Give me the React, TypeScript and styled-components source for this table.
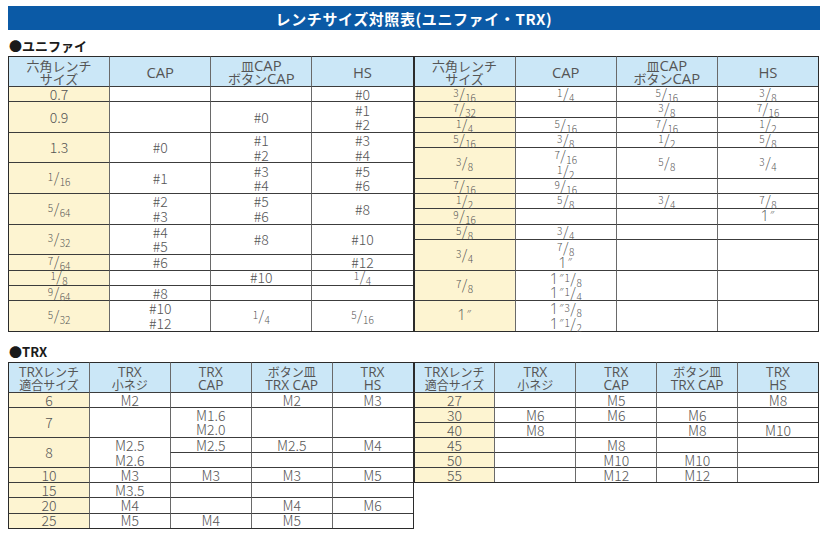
import React from 'react';
import styled, { createGlobalStyle } from 'styled-components';

const Global = createGlobalStyle`
  html, body { margin: 0; padding: 0; background: #ffffff; }
  body { font-family: "Noto Sans CJK JP", "Noto Sans", sans-serif; }
`;

const Page = styled.div`
  width: 829px;
  padding: 6px 0 0 8px;
  box-sizing: border-box;
`;

const Banner = styled.div`
  width: 812px;
  height: 24px;
  background: #0b5aa6;
  color: #ffffff;
  font-weight: 700;
  font-size: 15px;
  display: flex;
  align-items: center;
  justify-content: center;
  letter-spacing: 0.6px;
`;

const SectionTitle = styled.div<{ $gap: number }>`
  margin-top: ${(p) => p.$gap}px;
  height: 20px;
  line-height: 20px;
  font-size: 13px;
  font-weight: 700;
  color: #1a1a1a;
  padding-left: 1px;
`;

const Pair = styled.div`
  display: flex;
  align-items: flex-start;
  width: 811px;
`;

const Grid = styled.div<{ $cols: number; $units: number; $unit: number }>`
  flex: 1;
  display: grid;
  grid-template-columns: repeat(${(p) => p.$cols}, 1fr);
  grid-template-rows: 30px repeat(${(p) => p.$units}, ${(p) => p.$unit}px);
  border-right: 1px solid #2b2b2b;
  border-bottom: 1px solid #2b2b2b;
`;

const CellBase = styled.div<{ $edge?: boolean }>`
  box-sizing: border-box;
  display: flex;
  flex-direction: column;
  align-items: center;
  justify-content: center;
  text-align: center;
  border-left: 1px solid ${(p) => (p.$edge ? '#2b2b2b' : '#6a6a6a')};
  color: #555555;
  white-space: nowrap;
`;

const HeadCell = styled(CellBase)<{ $size: number }>`
  background: #cbe7f7;
  border-top: 1px solid #2b2b2b;
  font-size: ${(p) => p.$size}px;
  line-height: 13px;
  padding-top: 1px;
`;

const Lat = styled.span`
  font-family: "Open Sans", "Noto Sans", sans-serif;
  font-size: 1.14em;
`;

const BodyCell = styled(CellBase)<{ $span: number; $key?: boolean }>`
  grid-row: span ${(p) => p.$span};
  background: ${(p) => (p.$key ? '#fdf4d1' : '#ffffff')};
  border-top: 1px solid #3c3c3c;
  font-size: 14px;
  font-weight: 300;
  line-height: 14.5px;
`;

const Line = styled.div`
  height: 14.5px;
`;

const HeadLine = styled.div`
  height: 13px;
`;

const Frac = styled.span`
  display: inline-block;
`;

const Num = styled.span`
  font-size: 10px;
  position: relative;
  top: -2px;
`;

const Den = styled.span`
  font-size: 10px;
  position: relative;
  top: 3px;
`;

const Slash = styled.span`
  margin: 0 0.5px;
`;

const Inch = styled.span`
  font-size: 15px;
  font-family: "Open Sans", "Noto Sans", sans-serif;
  font-weight: 300;
  color: #5a5a5a;
`;

const Prime = styled.span`
  font-family: "DejaVu Sans", "Noto Sans", sans-serif;
  font-size: 0.75em;
  position: relative;
  top: -2px;
  margin: 0 1px 0 1px;
`;

const F = (n: string, d: string) => (
  <Frac>
    <Num>{n}</Num>
    <Slash>/</Slash>
    <Den>{d}</Den>
  </Frac>
);

const IN = (
  <Inch>
    1<Prime>″</Prime>
  </Inch>
);
const L = (t: string) => <Lat>{t}</Lat>;

type V = React.ReactNode | React.ReactNode[];
type Cell = { v: V; span: number };
type Row = { cells: Cell[]; sub?: boolean };

const c = (v: V = null, span = 1): Cell => ({ v, span });
const r = (...cells: Cell[]): Row => ({ cells });
const sub = (...cells: Cell[]): Row => ({ cells, sub: true });

const lines = (v: V) =>
  Array.isArray(v) ? v.map((x, i) => <Line key={i}>{x}</Line>) : v;

const headLines = (v: V) =>
  Array.isArray(v) ? v.map((x, i) => <HeadLine key={i}>{x}</HeadLine>) : v;

type TableProps = {
  cols: number;
  units: number;
  unit: number;
  headSize: number;
  head: V[];
  rows: Row[];
};

const Table = ({ cols, units, unit, headSize, head, rows }: TableProps) => (
  <Grid $cols={cols} $units={units} $unit={unit}>
    {head.map((h, i) => (
      <HeadCell key={`h${i}`} $edge={i === 0} $size={headSize}>
        {headLines(h)}
      </HeadCell>
    ))}
    {rows.flatMap((row, ri) =>
      row.cells.map((cell, ci) => (
        <BodyCell
          key={`${ri}-${ci}`}
          $span={cell.span}
          $edge={!row.sub && ci === 0}
          $key={!row.sub && ci === 0}
        >
          {lines(cell.v)}
        </BodyCell>
      ))
    )}
  </Grid>
);

const uniHead: V[] = [
  ['六角レンチ', 'サイズ'],
  L('CAP'),
  [<>皿{L('CAP')}</>, <>ボタン{L('CAP')}</>],
  L('HS'),
];

const uniLeft: Row[] = [
  r(c('0.7'), c(), c(), c('#0')),
  r(c('0.9', 2), c(null, 2), c('#0', 2), c(['#1', '#2'], 2)),
  r(c('1.3', 2), c('#0', 2), c(['#1', '#2'], 2), c(['#3', '#4'], 2)),
  r(c(F('1', '16'), 2), c('#1', 2), c(['#3', '#4'], 2), c(['#5', '#6'], 2)),
  r(c(F('5', '64'), 2), c(['#2', '#3'], 2), c(['#5', '#6'], 2), c('#8', 2)),
  r(c(F('3', '32'), 2), c(['#4', '#5'], 2), c('#8', 2), c('#10', 2)),
  r(c(F('7', '64')), c('#6'), c(), c('#12')),
  r(c(F('1', '8')), c(), c('#10'), c(F('1', '4'))),
  r(c(F('9', '64')), c('#8'), c(), c()),
  r(c(F('5', '32'), 2), c(['#10', '#12'], 2), c(F('1', '4'), 2), c(F('5', '16'), 2)),
];

const uniRight: Row[] = [
  r(c(F('3', '16')), c(F('1', '4')), c(F('5', '16')), c(F('3', '8'))),
  r(c(F('7', '32')), c(), c(F('3', '8')), c(F('7', '16'))),
  r(c(F('1', '4')), c(F('5', '16')), c(F('7', '16')), c(F('1', '2'))),
  r(c(F('5', '16')), c(F('3', '8')), c(F('1', '2')), c(F('5', '8'))),
  r(c(F('3', '8'), 2), c([F('7', '16'), F('1', '2')], 2), c(F('5', '8'), 2), c(F('3', '4'), 2)),
  r(c(F('7', '16')), c(F('9', '16')), c(), c()),
  r(c(F('1', '2')), c(F('5', '8')), c(F('3', '4')), c(F('7', '8'))),
  r(c(F('9', '16')), c(), c(), c(IN)),
  r(c(F('5', '8')), c(F('3', '4')), c(), c()),
  r(c(F('3', '4'), 2), c([F('7', '8'), IN], 2), c(null, 2), c(null, 2)),
  r(
    c(F('7', '8'), 2),
    c([<>{IN}{F('1', '8')}</>, <>{IN}{F('1', '4')}</>], 2),
    c(null, 2),
    c(null, 2)
  ),
  r(
    c(IN, 2),
    c([<>{IN}{F('3', '8')}</>, <>{IN}{F('1', '2')}</>], 2),
    c(null, 2),
    c(null, 2)
  ),
];

const trxHead: V[] = [
  [<>{L('TRX')}レンチ</>, '適合サイズ'],
  [L('TRX'), '小ネジ'],
  [L('TRX'), L('CAP')],
  ['ボタン皿', L('TRX CAP')],
  [L('TRX'), L('HS')],
];

const trxLeft: Row[] = [
  r(c('6'), c('M2'), c(), c('M2'), c('M3')),
  r(c('7', 2), c(null, 2), c(['M1.6', 'M2.0'], 2), c(null, 2), c(null, 2)),
  r(c('8', 2), c(['M2.5', 'M2.6'], 2), c('M2.5'), c('M2.5'), c('M4')),
  sub(c(), c(), c()),
  r(c('10'), c('M3'), c('M3'), c('M3'), c('M5')),
  r(c('15'), c('M3.5'), c(), c(), c()),
  r(c('20'), c('M4'), c(), c('M4'), c('M6')),
  r(c('25'), c('M5'), c('M4'), c('M5'), c()),
];

const trxRight: Row[] = [
  r(c('27'), c(), c('M5'), c(), c('M8')),
  r(c('30'), c('M6'), c('M6'), c('M6'), c()),
  r(c('40'), c('M8'), c(), c('M8'), c('M10')),
  r(c('45'), c(), c('M8'), c(), c()),
  r(c('50'), c(), c('M10'), c('M10'), c()),
  r(c('55'), c(), c('M12'), c('M12'), c()),
];

export default function App() {
  return (
    <Page>
      <Global />
      <Banner>レンチサイズ対照表(ユニファイ・TRX)</Banner>
      <SectionTitle $gap={6}>●ユニファイ</SectionTitle>
      <Pair>
        <Table cols={4} units={16} unit={15.3} headSize={13} head={uniHead} rows={uniLeft} />
        <Table cols={4} units={16} unit={15.3} headSize={13} head={uniHead} rows={uniRight} />
      </Pair>
      <SectionTitle $gap={10}>●TRX</SectionTitle>
      <Pair>
        <Table cols={5} units={9} unit={15.1} headSize={12} head={trxHead} rows={trxLeft} />
        <Table cols={5} units={6} unit={15.1} headSize={12} head={trxHead} rows={trxRight} />
      </Pair>
    </Page>
  );
}
